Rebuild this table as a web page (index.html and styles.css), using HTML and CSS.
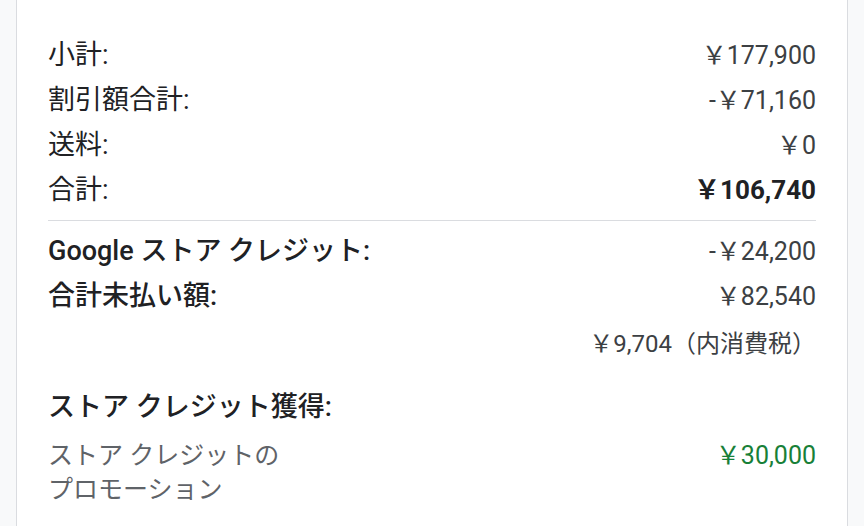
FILE: index.html
```html
<!DOCTYPE html>
<html lang="ja">
<head>
<meta charset="utf-8">
<link rel="stylesheet" href="styles.css">
</head>
<body>
<div class="page">
  <div class="card">
    <div class="row"><span class="label">小計:</span><span class="value">￥177,900</span></div>
    <div class="row"><span class="label">割引額合計:</span><span class="value">-￥71,160</span></div>
    <div class="row"><span class="label">送料:</span><span class="value">￥0</span></div>
    <div class="row"><span class="label">合計:</span><span class="value total">￥106,740</span></div>
    <div class="divider"></div>
    <div class="row"><span class="label strong">Google ストア クレジット:</span><span class="value">-￥24,200</span></div>
    <div class="row"><span class="label strong">合計未払い額:</span><span class="value">￥82,540</span></div>
    <div class="row tax"><span class="value tax-value">￥9,704（内消費税）</span></div>
    <div class="row heading"><span class="label strong">ストア クレジット獲得:</span></div>
    <div class="promo"><span class="promo-label">ストア クレジットのプロモーション</span><span class="promo-value">￥30,000</span></div>
  </div>
</div>
</body>
</html>
```
FILE: styles.css
```css
html, body {
  margin: 0;
  padding: 0;
  background: #f8f9fa;
}
body {
  font-family: Roboto, "Noto Sans CJK JP", sans-serif;
  font-size: 24px;
  color: #202124;
}
.page {
  width: 864px;
  height: 526px;
  overflow: hidden;
  display: flex;
  padding: 0 16px;
  box-sizing: border-box;
}
.card {
  flex: 1;
  background: #fff;
  border-left: 1px solid #dadce0;
  border-right: 1px solid #dadce0;
  padding: 33px 31px 0 31px;
  box-sizing: border-box;
}
.row {
  display: flex;
  justify-content: space-between;
  align-items: center;
  height: 45px;
  line-height: 45px;
}
.label {
  color: #202124;
  font-size: 27px;
}
.strong {
  font-weight: 500;
}
.value {
  color: #3c4043;
  font-size: 25px;
}
.tax-value {
  font-size: 24px;
}
.total {
  font-weight: 700;
  font-size: 26px;
  color: #202124;
}
.divider {
  height: 1px;
  background: #dadce0;
  margin: 7px 0 8px 0;
}
.tax {
  justify-content: flex-end;
  margin-top: 3px;
}
.heading {
  margin-top: 18px;
}
.promo {
  display: flex;
  justify-content: space-between;
  align-items: flex-start;
  margin-top: 9px;
  line-height: 34px;
}
.promo-label {
  width: 250px;
  font-size: 25px;
  color: #5f6368;
}
.promo-value {
  font-size: 25px;
  color: #188038;
}
```
